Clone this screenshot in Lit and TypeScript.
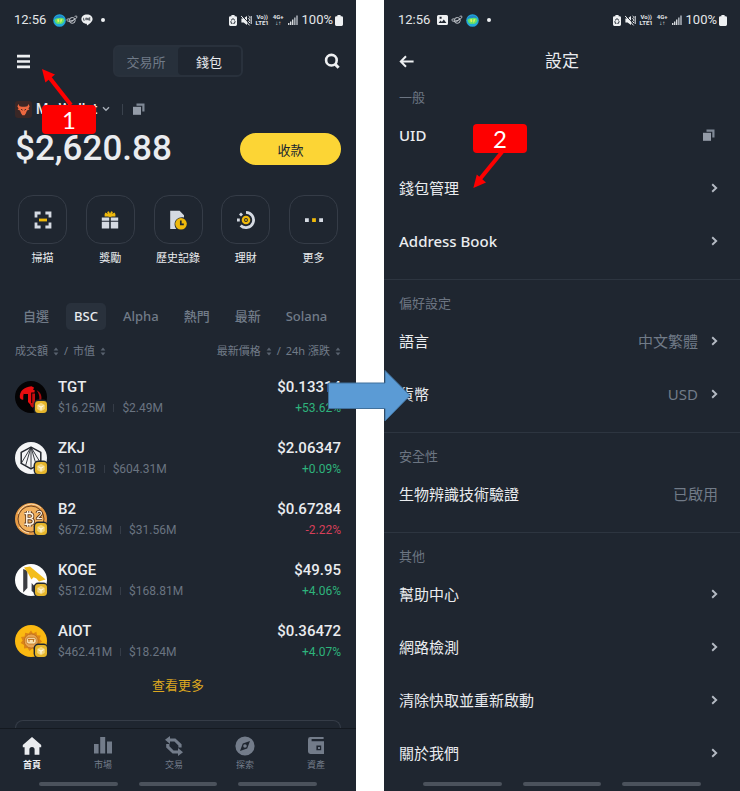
import { LitElement, html, svg, css, nothing } from "lit";
import { customElement, property } from "lit/decorators.js";
import { classMap } from "lit/directives/class-map.js";

const copyIcon = html`<svg width="12" height="12" viewBox="0 0 12 12" aria-hidden="true">
  <path d="M3.5 0.5H11.5V8.5H9.3V2.7H3.5Z" fill="#7f8895" />
  <rect x="0" y="3.8" width="8" height="8" fill="#949ca8" />
</svg>`;

const chevron = html`<svg class="chev" width="7" height="10" viewBox="0 0 7 10" aria-hidden="true">
  <path d="M1.2 1.2L5.2 5L1.2 8.8" fill="none" stroke="#b4bac3" stroke-width="1.9" />
</svg>`;

const sortIcon = html`<svg width="6" height="9" viewBox="0 0 6 9" aria-hidden="true">
  <path d="M0.6 3.4L3 0.6L5.4 3.4ZM0.6 5.6L3 8.4L5.4 5.6Z" fill="#59626f" />
</svg>`;

const globe = html`<svg width="13" height="13" viewBox="0 0 13 13" aria-hidden="true">
  <circle cx="6.5" cy="6.5" r="6.3" fill="#22a7d8" />
  <path d="M1 4.5C3 1 9 0.4 11 3.4C9.6 4.4 5 4 1 4.5Z" fill="#1f86c9" />
  <path d="M1.6 6C3.6 3.6 6 4.4 7.4 3.8C9.6 3.4 11.4 4.6 11.4 6.6C10.6 9.6 8.6 10.4 6.6 9.8C4.4 10.8 2 9.2 1.6 6Z" fill="#63e06a" />
  <path d="M4 5.6L6 5L6.4 7.6L4.8 8.4ZM7.2 5.4L9.4 5L8.6 7.6L7.4 9Z" fill="#e2f05a" />
</svg>`;

const planet = html`<svg width="12" height="10" viewBox="0 0 12 10" aria-hidden="true">
  <g fill="none" stroke="#c8ccd2" stroke-width="1">
    <circle cx="6.3" cy="5.4" r="2.9" />
    <path d="M3.4 3.8C0.6 4 0 5 1.6 6C3.6 7 8.6 5.2 10.8 2.6C11.6 1.4 10.6 0.8 8.6 1.4" />
    <path d="M4.8 5.4L6 6.6L8 4.4" />
  </g>
</svg>`;

const lineBubble = html`<svg width="12" height="12" viewBox="0 0 12 12" aria-hidden="true">
  <path d="M6 0.4C9.2 0.4 11.6 2.5 11.6 5C11.6 7.6 8.4 10.2 6 11.6C5.8 10.8 6 10 5.6 9.8C2.6 9.6 0.4 7.6 0.4 5C0.4 2.5 2.8 0.4 6 0.4Z" fill="#eef0f2" />
  <path d="M2.6 3.8V6.2H3.8M4.8 3.8V6.2M5.8 6.2V3.8L7.2 6.2V3.8M9.4 3.8H8.2V6.2H9.4M8.2 5H9.2" fill="none" stroke="#1f2630" stroke-width="0.7" />
</svg>`;

const photo = html`<svg width="11" height="10" viewBox="0 0 11 10" aria-hidden="true">
  <path fill-rule="evenodd" d="M1.5 0H9.5Q11 0 11 1.5V8.5Q11 10 9.5 10H1.5Q0 10 0 8.5V1.5Q0 0 1.5 0ZM1.6 8H9.4L6.8 4.6L4.9 7L3.6 5.6ZM2.6 1.8V3.8H4.6V1.8Z" fill="#eef0f2" />
</svg>`;

const tokenArt: Record<string, unknown> = {
  TGT: svg`<circle cx="16" cy="16" r="16" fill="#040304" />
    <path d="M4.8 16.6C4.4 10 9 6 16.4 5.2L19 6.6L17.8 10H15.4L16 12H11.2L10.8 10.4C8.6 11.6 8 14 8.4 18.6C6.6 18.8 5 18 4.8 16.6Z" fill="#e80d10" />
    <path d="M9 9H19.6V11.6H16.2V24.4L13 21V13H9Z" fill="#e80d10" />
    <path d="M17.2 12.6H20V24.6L17.8 26.8L15.6 25V22H17.2Z" fill="#c60d10" />
    <path d="M21.6 9.2C25.4 11 27.4 14.6 26.2 19.6L23.6 21.4C25 17 24.6 13.4 21.6 9.2Z" fill="#a80d10" />`,
  ZKJ: svg`<circle cx="16" cy="16" r="16" fill="#f4f5f6" />
    <g fill="none" stroke="#23272e" stroke-linejoin="round">
      <path d="M16 5.2L25.8 10.4V21.4L16 26.8L6.2 21.4V10.4Z" stroke-width="1.5" />
      <path d="M16 5.2L10.6 23.6M16 5.2L21.4 23.6M16 5.2V26.8M16 5.2L6.2 21.4M16 5.2L25.8 21.4" stroke-width="0.9" />
    </g>`,
  B2: svg`<circle cx="16" cy="16" r="16" fill="#e79b45" />
    <circle cx="16" cy="16" r="13" fill="#f2b15d" stroke="#5d371d" stroke-width="0.9" />
    <path d="M3 11A14 14 0 0 1 26 5M4.4 24A14 14 0 0 0 14 30" fill="none" stroke="#fbe3bd" stroke-width="0.9" />
    <g fill="none" stroke-linejoin="round">
      <path d="M9.4 10.6H15C18.6 10.6 18.6 15.6 15 15.6H11.8M15 15.6C19.6 15.6 19.4 21.2 15 21.2H9.4M11.8 10.6V21.2M12.6 8V10.6M15 8V10.6M12.6 21.2V23.8M15 21.2V23.8" stroke="#5d371d" stroke-width="3.2" />
      <path d="M9.4 10.6H15C18.6 10.6 18.6 15.6 15 15.6H11.8M15 15.6C19.6 15.6 19.4 21.2 15 21.2H9.4M11.8 10.6V21.2M12.6 8V10.6M15 8V10.6M12.6 21.2V23.8M15 21.2V23.8" stroke="#fdf3e2" stroke-width="1.5" />
      <path d="M22 10C22.4 7.6 26.8 7.8 26.4 10.6C26.2 12.4 23.4 13.4 22.2 15.6H27" stroke="#5d371d" stroke-width="2.9" />
      <path d="M22 10C22.4 7.6 26.8 7.8 26.4 10.6C26.2 12.4 23.4 13.4 22.2 15.6H27" stroke="#fdf3e2" stroke-width="1.2" />
    </g>`,
  KOGE: svg`<circle cx="16" cy="16" r="16" fill="#fdfdfd" />
    <path d="M8.2 5L12.4 6.8V24L8.2 28.6Z" fill="#3b3d42" />
    <path d="M9 3.4L15 2.6L30.6 15.4L24 17.6L21.4 14.4L18.6 13.2L16.4 15.4L13.2 9.6Z" fill="#f3bd1b" />
    <path d="M16.6 19L19.4 22V29L16.6 27Z" fill="#3b3d42" />`,
  AIOT: svg`<circle cx="16" cy="16" r="16" fill="#fbb911" />
    <path d="M16 5.6L18 8.4L21.4 6.8L22 10.2L25.8 10.6L24.6 14L27 16.6L24.4 18.6L25.4 22L21.8 22.2L20.4 25.4L17.4 23.6L14.4 26L12.6 23L9 23.4L9 20L5.6 18L7.6 15.4L6 12L9.6 11.4L10.2 7.8L13.6 8.6Z" fill="#dc8416" />
    <circle cx="16.2" cy="16" r="7" fill="#e9a552" stroke="#b96c17" stroke-width="0.8" />
    <rect x="11.4" y="12.4" width="9.8" height="6.6" rx="2.6" fill="#f8dfae" stroke="#b96c17" stroke-width="0.7" />
    <path d="M14 14.4V16.8M18.4 14.4V16.8M13 14.4H19.4" stroke="#b96c17" stroke-width="1" fill="none" />`,
};

const chainBadge = svg`<rect x="18.6" y="18.6" width="14.4" height="14.4" rx="4.6" fill="#1f2630" />
  <rect x="20" y="20" width="12" height="12" rx="3.4" fill="#e5b52b" />
  <path d="M26 21.8L29.8 24V28L26 30.2L22.2 28V24Z" fill="#f3d67d" />
  <path d="M23.4 24.6L26 26.2L28.6 24.6M26 26.2V28.8" stroke="#fffbe9" stroke-width="1.1" fill="none" />`;

interface Token {
  name: string;
  volume: string;
  cap: string;
  price: string;
  change: string;
}

const tokens: Token[] = [
  { name: "TGT", volume: "$16.25M", cap: "$2.49M", price: "$0.13314", change: "+53.62%" },
  { name: "ZKJ", volume: "$1.01B", cap: "$604.31M", price: "$2.06347", change: "+0.09%" },
  { name: "B2", volume: "$672.58M", cap: "$31.56M", price: "$0.67284", change: "-2.22%" },
  { name: "KOGE", volume: "$512.02M", cap: "$168.81M", price: "$49.95", change: "+4.06%" },
  { name: "AIOT", volume: "$462.41M", cap: "$18.24M", price: "$0.36472", change: "+4.07%" },
];

const actions = [
  {
    label: "掃描",
    art: svg`<path d="M3 7.6V3H7.6M12.4 3H17V7.6M17 12.4V17H12.4M7.6 17H3V12.4" fill="none" stroke="#d5dae2" stroke-width="2.8" />
      <rect x="6" y="8.6" width="8" height="2.8" fill="#efb90b" />`,
  },
  {
    label: "獎勵",
    art: svg`<path d="M1.8 7.4H9.2V10.8H1.8ZM10.8 7.4H18.2V10.8H10.8ZM1.8 11.8H9.2V18.6H1.8ZM10.8 11.8H18.2V18.6H10.8Z" fill="#d5dae2" />
      <path d="M10 6.4L5 3.4M10 6.4L8 1.6M10 6.4L12 1.6M10 6.4L15 3.4M4.6 5.4H15.4" fill="none" stroke="#efb90b" stroke-width="2" />`,
  },
  {
    label: "歷史記錄",
    art: svg`<path d="M2.2 0.8H11.6L16 5.2V7.4C11 6.2 6.6 9.4 6.6 14C6.6 16 7.2 17.6 8.4 19H2.2Z" fill="#d5dae2" />
      <circle cx="13" cy="13.8" r="5.8" fill="#efb90b" />
      <path d="M12.8 10.6V14.4H15.8" fill="none" stroke="#1f2630" stroke-width="1.7" />`,
  },
  {
    label: "理財",
    art: svg`<path d="M10 2.4A7.6 7.6 0 1 1 4.6 15.4" fill="none" stroke="#d5dae2" stroke-width="2.8" />
      <circle cx="10" cy="10" r="3.1" fill="none" stroke="#efb90b" stroke-width="2.4" />
      <circle cx="10" cy="10" r="1" fill="#efb90b" />
      <path d="M5 2.4L7 4.4L5 6.4L3 4.4ZM1 8.6H3.8V11.4H1Z" fill="#d5dae2" />`,
  },
  {
    label: "更多",
    art: svg`<path d="M1 8.2H4.8V12H1ZM15.2 8.2H19V12H15.2Z" fill="#d5dae2" />
      <path d="M8.1 8.2H11.9V12H8.1Z" fill="#efb90b" />`,
  },
];

const navItems = [
  { label: "首頁", art: svg`<path d="M10 1L19.2 9V11.2H17.4V18.8H12.6V13.6A2.6 2.6 0 0 0 7.4 13.6V18.8H2.6V11.2H0.8V9Z" fill="#eaecef" />` },
  { label: "市場", art: svg`<path d="M1 8H5.6V17.4H1ZM7.2 1H12.2V17.4H7.2ZM14 5.6H19V17.4H14Z" fill="#737c8a" />` },
  {
    label: "交易",
    art: svg`<path d="M6 0V8L1 3.8ZM5.6 2.4H11.4L17.6 8.2V11.4H14.4V9.4L10.4 5.4H5.6ZM14 20V12L19 16.2ZM14.4 17.6H8.6L2.2 11.6V8L5.4 8V10.2L9.6 14.6H14.4Z" fill="#737c8a" />`,
  },
  {
    label: "探索",
    art: svg`<path fill-rule="evenodd" d="M10 0.4A9.6 9.6 0 1 1 10 19.6A9.6 9.6 0 1 1 10 0.4ZM15 5L7.8 7.4L5 15L12.2 12.4ZM10 8.2A1.8 1.8 0 1 1 10 11.8A1.8 1.8 0 1 1 10 8.2Z" fill="#737c8a" />`,
  },
  {
    label: "資產",
    art: svg`<path fill-rule="evenodd" d="M4.4 1H17.6V3H5.6V5.2H18V18H4.4Q2 18 2 15.6V3.4Q2 1 4.4 1ZM10.4 9.4V14.2H15.2V9.4Z" fill="#737c8a" />
      <path d="M12 11H14V13H12Z" fill="#737c8a" />`,
  },
];

interface SettingRow {
  label: string;
  value?: string;
  copy?: boolean;
  plain?: boolean;
  latin?: boolean;
}

const sections: { title: string; rows: SettingRow[] }[] = [
  {
    title: "一般",
    rows: [{ label: "UID", copy: true, latin: true }, { label: "錢包管理" }, { label: "Address Book", latin: true }],
  },
  { title: "偏好設定", rows: [{ label: "語言", value: "中文繁體" }, { label: "貨幣", value: "USD" }] },
  { title: "安全性", rows: [{ label: "生物辨識技術驗證", value: "已啟用", plain: true }] },
  { title: "其他", rows: [{ label: "幫助中心" }, { label: "網路檢測" }, { label: "清除快取並重新啟動" }, { label: "關於我們" }] },
];

const base = css`
  * {
    box-sizing: border-box;
  }
  svg {
    display: block;
    flex: none;
  }
  button {
    margin: 0;
    padding: 0;
    border: 0;
    background: none;
    color: inherit;
    font: inherit;
    cursor: pointer;
  }
  h1,
  h2,
  ul {
    margin: 0;
    padding: 0;
    font-weight: inherit;
    font-size: inherit;
    list-style: none;
  }
`;

const panel = css`
  :host {
    position: relative;
    display: flex;
    flex-direction: column;
    min-width: 0;
    min-height: 100vh;
    background: #1f2630;
    color: #eaecef;
  }
  .callout {
    position: absolute;
    width: 54px;
    height: 29px;
    border-radius: 4px;
    background: #fe0000;
    color: #fff;
    font: 24px/29px Lato, sans-serif;
    text-align: center;
  }
  .pointer {
    position: absolute;
  }
`;

@customElement("status-bar")
export class StatusBar extends LitElement {
  @property() variant = "home";

  static styles = [
    base,
    css`
      :host {
        display: flex;
        align-items: center;
        justify-content: space-between;
        height: 40px;
        padding: 0 13px 0 14px;
        font: 13px/16px Roboto, sans-serif;
        color: #e4e6e9;
      }
      .side {
        display: flex;
        align-items: center;
        gap: 4px;
      }
      .notes {
        gap: 3px;
        padding-left: 3px;
      }
      .joined {
        display: flex;
        align-items: center;
      }
      .dot {
        width: 4px;
        height: 4px;
        margin-left: 5px;
        border-radius: 50%;
        background: #eef0f2;
      }
      .tiny {
        font: bold 6px/6px Roboto, sans-serif;
        text-align: center;
      }
      .level {
        display: flex;
        align-items: center;
        gap: 2px;
      }
    `,
  ];

  render() {
    return html`
      <div class="side">
        <span>12:56</span>
        <div class="side notes">
          ${this.variant === "home"
            ? html`<span class="joined">${globe}${planet}</span>${lineBubble}`
            : html`${photo}${planet}${globe}`}
          <span class="dot"></span>
        </div>
      </div>
      <div class="side">
        <svg width="8" height="11" viewBox="0 0 8 11" aria-hidden="true">
          <path d="M2.4 0H5.6V1.2H6.6Q8 1.2 8 2.6V9.6Q8 11 6.6 11H1.4Q0 11 0 9.6V2.6Q0 1.2 1.4 1.2H2.4Z" fill="#eef0f2" />
          <path d="M2 5.4L4 3.6L6 5.4M6.2 6.2L5.4 8.4H4.4M1.8 6.2L2.4 8.4H3.4" fill="none" stroke="#1f2630" stroke-width="1" />
        </svg>
        <svg width="11" height="11" viewBox="0 0 11 11" aria-hidden="true">
          <path d="M0.4 3.4H2.6L6 1V10L2.6 7.4H0.4Z" fill="#eef0f2" />
          <path d="M0.4 0L9.4 10" stroke="#1f2630" stroke-width="1" />
          <path d="M0 0.8L8.6 10.4M7.6 1L9 2.4L7.6 3.8L9 5.2L7.6 6.6L9 8M10.2 1V9" fill="none" stroke="#eef0f2" stroke-width="1" />
        </svg>
        <span class="tiny">Vo))<br />LTE1</span>
        <span class="tiny">4G+<br />↓↑</span>
        <svg width="10" height="10" viewBox="0 0 10 10" aria-hidden="true">
          <path d="M0 8H1.4V10H0ZM2 6.4H3.4V10H2ZM4 4.6H5.4V10H4Z" fill="#d6d9dd" />
          <path d="M6 2.4H7.6V10H6ZM8.2 0.4H9.8V10H8.2Z" fill="#a5abb3" />
        </svg>
        <span class="level">
          100%
          <svg width="8" height="11" viewBox="0 0 8 11" aria-hidden="true">
            <path d="M2.4 0H5.6V1.2H6.6Q8 1.2 8 2.6V9.6Q8 11 6.6 11H1.4Q0 11 0 9.6V2.6Q0 1.2 1.4 1.2H2.4Z" fill="#eef0f2" />
          </svg>
        </span>
      </div>
    `;
  }
}

@customElement("gesture-hints")
export class GestureHints extends LitElement {
  static styles = css`
    :host {
      display: grid;
      grid-template-columns: repeat(3, 1fr);
      gap: 21px;
      padding: 2px 39px 5px;
    }
    span {
      height: 4px;
      border-radius: 2px;
      background: #4b525c;
    }
  `;

  render() {
    return html`<span></span><span></span><span></span>`;
  }
}

@customElement("wallet-home")
export class WalletHome extends LitElement {
  static styles = [
    base,
    panel,
    css`
      .top {
        display: flex;
        align-items: center;
        justify-content: space-between;
        height: 42px;
        padding: 0 16px;
      }
      .switch {
        display: flex;
        height: 32px;
        border: 2px solid #29313c;
        border-radius: 6px;
        background: #27303b;
        font-size: 13px;
        color: #717b88;
      }
      .switch button {
        width: 63px;
        border-radius: 4px;
      }
      .switch .on {
        background: #1f2630;
        color: #eaecef;
      }
      .account {
        display: flex;
        align-items: center;
        height: 20px;
        margin-top: 17px;
        padding: 0 15px;
        font: 500 14px/20px Roboto, sans-serif;
      }
      .who {
        display: flex;
        align-items: center;
        gap: 4px;
      }
      .rule {
        width: 1px;
        height: 11px;
        margin: 0 10px 0 12px;
        background: #3a424d;
      }
      .balance {
        display: flex;
        align-items: center;
        justify-content: space-between;
        height: 32px;
        margin-top: 14px;
        padding: 0 15px;
      }
      .amount {
        font: 500 35px/36px Roboto, sans-serif;
      }
      .receive {
        width: 101px;
        height: 32px;
        border-radius: 16px;
        background: #fcd535;
        color: #202630;
        font-size: 13px;
      }
      .actions {
        display: flex;
        justify-content: space-between;
        margin-top: 30px;
        padding: 0 18px;
        font-size: 11px;
        line-height: 16px;
      }
      .actions button {
        display: flex;
        flex-direction: column;
        align-items: center;
        gap: 6px;
        width: 49px;
        white-space: nowrap;
      }
      .tile {
        display: grid;
        place-items: center;
        width: 49px;
        height: 49px;
        border: 1px solid #353c47;
        border-radius: 15px;
      }
      .tabs {
        display: flex;
        gap: 9px;
        margin-top: 37px;
        padding: 0 15px;
        font-size: 13px;
        font-weight: 500;
        line-height: 27px;
        color: #717b88;
      }
      .tabs button {
        padding: 0 8px;
        border-radius: 5px;
      }
      .tabs .on {
        background: #29313c;
        color: #eaecef;
      }
      .table {
        width: 100%;
        margin-top: 10px;
        border-collapse: collapse;
      }
      th,
      td {
        padding: 0 15px;
        text-align: left;
        font-weight: 400;
      }
      th {
        height: 27px;
        padding-bottom: 5px;
        font-size: 11px;
        line-height: 16px;
        color: #717b88;
      }
      .sorts {
        display: flex;
        align-items: center;
        gap: 5px;
      }
      .sorts button {
        display: flex;
        align-items: center;
        gap: 5px;
      }
      .end {
        justify-content: flex-end;
        text-align: right;
      }
      td {
        height: 61px;
        font: 500 15px/21px Roboto, sans-serif;
      }
      .coin {
        display: flex;
        align-items: center;
        gap: 10px;
      }
      .meta {
        display: flex;
        align-items: center;
        gap: 8px;
        font-size: 12px;
        font-weight: 400;
        line-height: 20px;
        color: #6a7481;
      }
      .bar {
        width: 1px;
        height: 8px;
        background: #353c47;
      }
      .up,
      .down {
        font-size: 12px;
        font-weight: 400;
        line-height: 20px;
        color: #2eb37c;
      }
      .down {
        color: #d63f59;
      }
      .more {
        align-self: center;
        font-size: 13px;
        line-height: 27px;
        color: #dca720;
      }
      .peek {
        height: 8px;
        margin: 21px 15px 0;
        border: 1px solid #353c47;
        border-bottom: 0;
        border-radius: 12px 12px 0 0;
      }
      .dock {
        margin-top: auto;
        border-top: 1px solid #141920;
      }
      .nav {
        display: flex;
        justify-content: space-between;
        height: 51px;
        padding: 7px 20px 0 12px;
        font-size: 9px;
        line-height: 14px;
        color: #737c8a;
      }
      .nav button {
        display: flex;
        flex-direction: column;
        align-items: center;
        gap: 2px;
        width: 40px;
      }
      .nav .on {
        color: #eaecef;
        font-weight: 700;
      }
      .callout {
        left: 42px;
        top: 105px;
      }
      .pointer {
        left: 40px;
        top: 66px;
      }
    `,
  ];

  render() {
    return html`
      <status-bar variant="home"></status-bar>
      <header class="top">
        <button aria-label="選單">
          <svg width="15" height="15" viewBox="0 0 15 15" aria-hidden="true">
            <path d="M1 0.8H14V3.4H1ZM1 6.2H14V8.8H1ZM1 11.6H14V14.2H1Z" fill="#eef0f2" />
          </svg>
        </button>
        <div class="switch" role="tablist">
          <button role="tab" aria-selected="false">交易所</button>
          <button class="on" role="tab" aria-selected="true">錢包</button>
        </div>
        <button aria-label="搜尋">
          <svg width="16" height="16" viewBox="0 0 16 16" aria-hidden="true">
            <circle cx="7.4" cy="7.2" r="5.3" fill="none" stroke="#eef0f2" stroke-width="2.6" />
            <path d="M11 11L14.6 14.8" stroke="#eef0f2" stroke-width="3" />
          </svg>
        </button>
      </header>
      <div class="account">
        <button class="who">
          <svg width="17" height="17" viewBox="0 0 17 17" aria-hidden="true">
            <rect width="17" height="17" rx="3" fill="#3a2726" />
            <path d="M3.4 3L4.6 5.2L7 5.8H10L12.4 5.2L13.6 3L14.6 5.4L13.4 7.4L14.4 8.6L12 9.6L10.8 12.4L9.6 14.2H7.4L6.2 12.4L5 9.6L2.6 8.6L3.6 7.4L2.4 5.4Z" fill="#ee6840" />
            <path d="M6 8.2L7.6 9.2M11 8.2L9.4 9.2" stroke="#3a2726" stroke-width="0.9" />
          </svg>
          <span>My Wallet</span>
          <svg width="8" height="6" viewBox="0 0 8 6" aria-hidden="true">
            <path d="M1 1.2L4 4.2L7 1.2" fill="none" stroke="#a7aeb8" stroke-width="1.4" />
          </svg>
        </button>
        <span class="rule"></span>
        <button aria-label="複製">${copyIcon}</button>
      </div>
      <div class="balance">
        <span class="amount">$2,620.88</span>
        <button class="receive">收款</button>
      </div>
      <div class="actions">
        ${actions.map(
          (a) => html`<button>
            <span class="tile"><svg width="20" height="20" viewBox="0 0 20 20" aria-hidden="true">${a.art}</svg></span>
            <span>${a.label}</span>
          </button>`,
        )}
      </div>
      <div class="tabs" role="tablist">
        ${["自選", "BSC", "Alpha", "熱門", "最新", "Solana"].map(
          (t) => html`<button role="tab" aria-selected=${t === "BSC"} class=${classMap({ on: t === "BSC" })}>${t}</button>`,
        )}
      </div>
      <table class="table">
        <thead>
          <tr>
            <th>
              <div class="sorts">
                <button>成交額${sortIcon}</button><span>/</span><button>市值${sortIcon}</button>
              </div>
            </th>
            <th>
              <div class="sorts end">
                <button>最新價格${sortIcon}</button><span>/</span><button>24h 漲跌${sortIcon}</button>
              </div>
            </th>
          </tr>
        </thead>
        <tbody>
          ${tokens.map(
            (t) => html`<tr>
              <td>
                <div class="coin">
                  <svg width="33" height="33" viewBox="0 0 33 33" aria-hidden="true">${tokenArt[t.name]}${chainBadge}</svg>
                  <div>
                    <div>${t.name}</div>
                    <div class="meta">${t.volume}<span class="bar"></span>${t.cap}</div>
                  </div>
                </div>
              </td>
              <td class="end">
                <div>${t.price}</div>
                <div class=${t.change.startsWith("-") ? "down" : "up"}>${t.change}</div>
              </td>
            </tr>`,
          )}
        </tbody>
      </table>
      <button class="more">查看更多</button>
      <div class="peek"></div>
      <div class="dock">
        <nav class="nav">
          ${navItems.map(
            (n, i) => html`<button class=${classMap({ on: i === 0 })}>
              <svg width="20" height="20" viewBox="0 0 20 20" aria-hidden="true">${n.art}</svg>
              <span>${n.label}</span>
            </button>`,
          )}
        </nav>
        <gesture-hints></gesture-hints>
      </div>
      <svg class="pointer" width="36" height="42" viewBox="0 0 36 42" aria-hidden="true">
        <path d="M31 39L9 11" stroke="#fe0000" stroke-width="4" />
        <path d="M2 3L15 8.6L5.4 16.4Z" fill="#fe0000" />
      </svg>
      <span class="callout">1</span>
    `;
  }
}

@customElement("settings-screen")
export class SettingsScreen extends LitElement {
  static styles = [
    base,
    panel,
    css`
      .head {
        display: grid;
        grid-template-columns: 40px 1fr 40px;
        align-items: center;
        height: 42px;
      }
      .head h1 {
        font-size: 17px;
        line-height: 24px;
        text-align: center;
      }
      .back {
        display: flex;
        padding-left: 15px;
      }
      .group {
        padding: 12px 0;
        border-bottom: 1px solid #2d3540;
      }
      .group:first-of-type {
        padding-top: 4px;
      }
      .group:last-of-type {
        padding-bottom: 0;
        border-bottom: 0;
      }
      h2 {
        padding: 0 15px;
        font-size: 13px;
        line-height: 22px;
        color: #6c7582;
      }
      .row {
        display: flex;
        align-items: center;
        width: 100%;
        height: 53px;
        padding: 0 22px 0 15px;
        font-size: 15px;
        text-align: left;
      }
      .name {
        flex: 1;
      }
      .latin {
        font-weight: 500;
      }
      .value {
        color: #717b88;
      }
      .chev {
        margin-left: 13px;
      }
      .copy {
        padding-right: 3px;
      }
      gesture-hints {
        margin-top: auto;
      }
      .callout {
        left: 89px;
        top: 124px;
      }
      .pointer {
        left: 87px;
        top: 150px;
      }
    `,
  ];

  render() {
    return html`
      <status-bar variant="settings"></status-bar>
      <header class="head">
        <button class="back" aria-label="返回">
          <svg width="15" height="13" viewBox="0 0 15 13" aria-hidden="true">
            <path d="M1.6 6.5H14.6M7 1.2L1.8 6.5L7 11.8" fill="none" stroke="#eef0f2" stroke-width="2" />
          </svg>
        </button>
        <h1>設定</h1>
      </header>
      ${sections.map(
        (s) => html`<section class="group">
          <h2>${s.title}</h2>
          <ul>
            ${s.rows.map(
              (r) => html`<li>
                <button class="row">
                  <span class=${classMap({ name: true, latin: !!r.latin })}>${r.label}</span>
                  ${r.value ? html`<span class="value">${r.value}</span>` : nothing}
                  ${r.copy ? html`<span class="copy">${copyIcon}</span>` : r.plain ? nothing : chevron}
                </button>
              </li>`,
            )}
          </ul>
        </section>`,
      )}
      <gesture-hints></gesture-hints>
      <svg class="pointer" width="36" height="42" viewBox="0 0 36 42" aria-hidden="true">
        <path d="M31 2L9 29" stroke="#fe0000" stroke-width="4" />
        <path d="M2.4 38L5.8 24.6L15 32.4Z" fill="#fe0000" />
      </svg>
      <span class="callout">2</span>
    `;
  }
}

@customElement("app-root")
export class AppRoot extends LitElement {
  static styles = css`
    :host {
      position: relative;
      display: grid;
      grid-template-columns: 1fr 1fr;
      gap: 28px;
      background: #fff;
      font-family: "Noto Sans", "Noto Sans CJK TC", sans-serif;
    }
    .flow {
      position: absolute;
      left: calc(50% - 43px);
      top: 369px;
    }
  `;

  render() {
    return html`
      <wallet-home></wallet-home>
      <settings-screen></settings-screen>
      <svg class="flow" width="84" height="54" viewBox="0 0 84 54" aria-hidden="true">
        <path d="M1.5 14H58V1.5L83 26.6L58 52V39.5H1.5Z" fill="#5b9bd5" stroke="#41719c" stroke-width="1" />
      </svg>
    `;
  }
}
